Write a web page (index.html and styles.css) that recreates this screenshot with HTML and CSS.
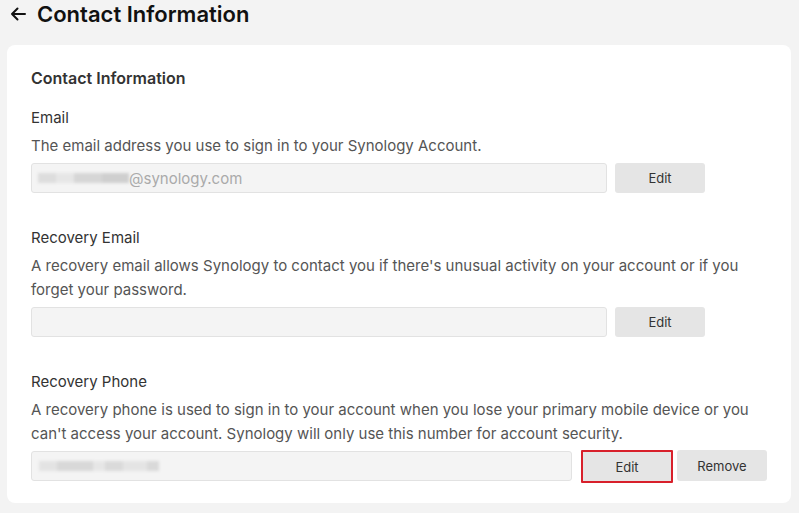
FILE: index.html
```html
<!DOCTYPE html>
<html lang="en">
<head>
<meta charset="utf-8">
<title>Contact Information</title>
<link rel="stylesheet" href="styles.css">
</head>
<body>
<header class="page-head">
  <svg class="back" width="16" height="14" viewBox="0 0 16 14" aria-hidden="true">
    <path d="M15 7H2M7.5 1.5L2 7l5.5 5.5" fill="none" stroke="#111" stroke-width="2" stroke-linecap="round" stroke-linejoin="round"/>
  </svg>
  <h1>Contact Information</h1>
</header>
<main class="card">
  <h2 class="card-title">Contact Information</h2>

  <section class="field">
    <div class="label">Email</div>
    <p class="desc">The email address you use to sign in to your Synology Account.</p>
    <div class="row">
      <div class="input input-fixed"><span class="blur blur-email"></span><span class="muted">@synology.com</span></div>
      <button class="btn">Edit</button>
    </div>
  </section>

  <section class="field">
    <div class="label">Recovery Email</div>
    <p class="desc">A recovery email allows Synology to contact you if there's unusual activity on your account or if you forget your password.</p>
    <div class="row">
      <div class="input input-fixed"></div>
      <button class="btn">Edit</button>
    </div>
  </section>

  <section class="field">
    <div class="label">Recovery Phone</div>
    <p class="desc">A recovery phone is used to sign in to your account when you lose your primary mobile device or you can't access your account. Synology will only use this number for account security.</p>
    <div class="row">
      <div class="input input-grow"><span class="blur blur-phone"></span></div>
      <button class="btn btn-highlight">Edit</button>
      <button class="btn btn-remove">Remove</button>
    </div>
  </section>
</main>
</body>
</html>
```
FILE: styles.css
```css
* { box-sizing: border-box; }
html, body { margin: 0; padding: 0; }
body {
  background: #f3f3f3;
  font-family: Inter, "Noto Sans", sans-serif;
  color: #333;
  width: 799px;
  height: 513px;
  overflow: hidden;
}
.page-head {
  display: flex;
  align-items: center;
  height: 28px;
  padding-left: 10px;
  gap: 11px;
}
.back { flex: none; }
.page-head h1 {
  margin: 0;
  font-size: 22px;
  font-weight: 600;
  color: #111;
  line-height: 28px;
}
.card {
  margin: 17px 8px 0 7px;
  background: #fff;
  border-radius: 8px;
  padding: 23px 24px 20px 24px;
}
.card-title {
  margin: 0;
  font-size: 16px;
  font-weight: 600;
  line-height: 20px;
  color: #333;
}
.field { margin-top: 20px; }
.field + .field { margin-top: 35px; }
.label {
  font-size: 15px;
  line-height: 20px;
  color: #333;
}
.desc {
  margin: 6px 0 0;
  font-size: 15px;
  line-height: 24px;
  color: #555;
}
.row {
  display: flex;
  align-items: flex-start;
  margin-top: 5px;
  gap: 8px;
}
.input {
  height: 30px;
  border: 1px solid #e2e2e2;
  background: #f4f4f4;
  border-radius: 3px;
  display: flex;
  align-items: center;
  padding-left: 6px;
  font-size: 15px;
}
.input-fixed { width: 576px; }
.input-grow { flex: 1; }
.muted { color: #aaa; }
.blur {
  display: inline-block;
  height: 10px;
  filter: blur(1.5px);
}
.blur-email {
  width: 91px;
  background: linear-gradient(90deg, #ddd 0 20%, #e6e6e6 20% 40%, #d6d6d6 40% 70%, #cfcfcf 70% 100%);
}
.blur-phone {
  width: 120px;
  margin-left: 1px;
  background: linear-gradient(90deg, #e3e3e3 0 15%, #d8d8d8 15% 45%, #e6e6e6 45% 55%, #dadada 55% 70%, #e4e4e4 70% 90%, #d9d9d9 90% 100%);
}
.btn {
  width: 90px;
  height: 30px;
  border: none;
  border-radius: 3px;
  background: #e5e5e5;
  font-family: inherit;
  font-size: 13px;
  color: #333;
  padding: 0;
}
.btn-highlight {
  width: 92px;
  height: 33px;
  margin-top: -1px;
  margin-left: 1px;
  border: 2px solid #d8202b;
  border-radius: 1px;
}
.btn-remove { margin-left: -4px; margin-top: -1px; height: 31px; }
```
